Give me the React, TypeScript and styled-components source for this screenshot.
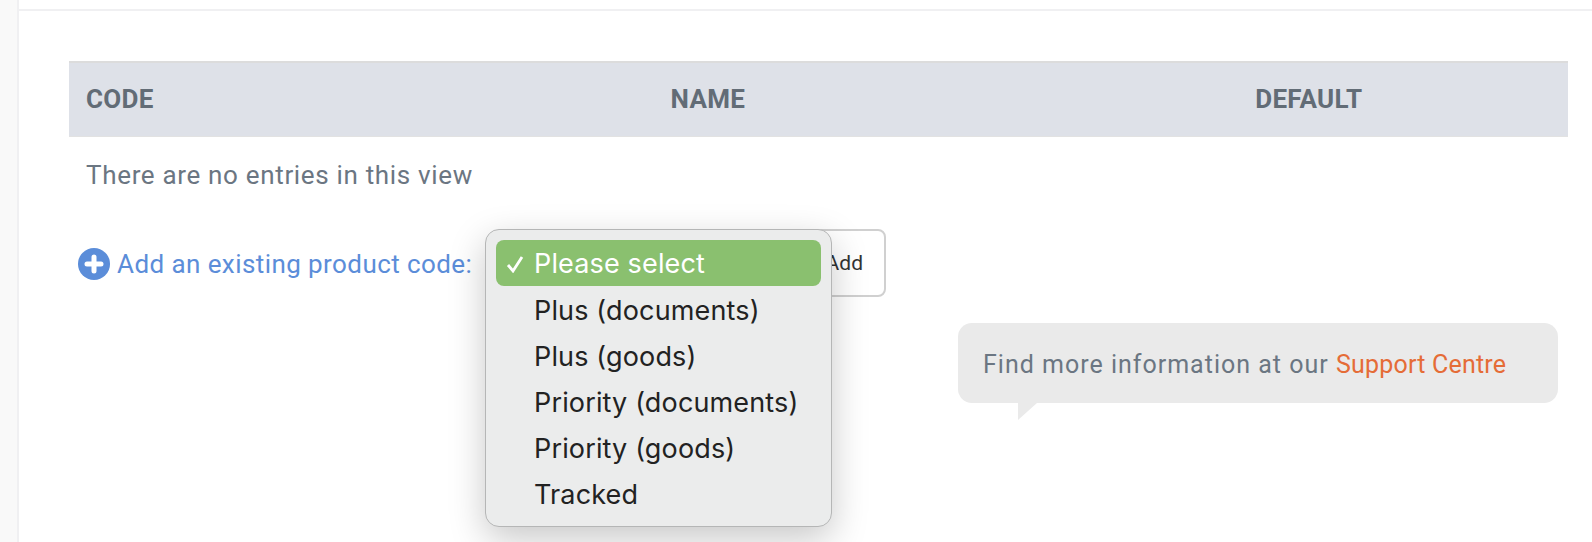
import React from "react"
import styled, { createGlobalStyle } from "styled-components"

const GlobalStyle = createGlobalStyle`
    html, body {
        margin: 0;
        padding: 0;
        background: #fff;
    }
`;

const options = ["Plus (documents)", "Plus (goods)", "Priority (documents)", "Priority (goods)", "Tracked"];

const App = () => (
    <>
        <GlobalStyle />
        <Page>
            <Sidebar />
            <Main>
                <TopBar />
                <Content>
                    <HeaderRow>
                        <HeaderCell $width="585px">CODE</HeaderCell>
                        <HeaderCell $width="585px">NAME</HeaderCell>
                        <HeaderCell $width="330px">DEFAULT</HeaderCell>
                    </HeaderRow>
                    <EmptyRow>There are no entries in this view</EmptyRow>
                    <AddRow>
                        <PlusIcon viewBox="0 0 32 32">
                            <circle cx="16" cy="16" r="16" fill="#5b8dd9" />
                            <path d="M16 9v14M9 16h14" stroke="#fff" strokeWidth="5" strokeLinecap="round" />
                        </PlusIcon>
                        <AddLabel>Add an existing product code:</AddLabel>
                        <SelectSpot>
                            <HiddenSelect />
                            <AddButton>Add</AddButton>
                            <Menu>
                                <SelectedOption>
                                    <Check viewBox="0 0 18 18">
                                        <path d="M2 10l5 6L16 2" fill="none" stroke="#fff" strokeWidth="2.8" />
                                    </Check>
                                    Please select
                                </SelectedOption>
                                {options.map((option) => (
                                    <Option key={option}>{option}</Option>
                                ))}
                            </Menu>
                        </SelectSpot>
                    </AddRow>
                    <Callout>
                        <span>Find more information at our <SupportLink>Support Centre</SupportLink></span>
                    </Callout>
                </Content>
            </Main>
        </Page>
    </>
);

export default App;

const Page = styled.div`
    display: flex;
    width: 1592px;
    height: 542px;
    overflow: hidden;
    font-family: "Roboto", "Liberation Sans", sans-serif;
`;

const Sidebar = styled.div`
    width: 17px;
    flex: none;
    background: #f9f9f9;
    border-right: 2px solid #f0f0f2;
`;

const Main = styled.div`
    flex: 1;
    min-width: 0;
`;

const TopBar = styled.div`
    height: 9px;
    border-bottom: 2px solid #f0f0f2;
`;

const Content = styled.div`
    padding: 50px 24px 0 50px;
`;

const HeaderRow = styled.div`
    display: flex;
    height: 76px;
    background: #dee1e8;
    border-top: 2px solid #dcdcdc;
    border-bottom: 1px solid #e2e2e2;
    box-sizing: border-box;
`;

const HeaderCell = styled.div<{ $width: string }>`
    width: ${({ $width }) => $width};
    padding: 0 0 2px 17px;
    box-sizing: border-box;
    align-self: center;
    font-size: 26px;
    font-weight: 700;
    letter-spacing: 0.3px;
    color: #626c76;
`;

const EmptyRow = styled.div`
    padding: 23px 17px 0;
    height: 36px;
    font-size: 26px;
    letter-spacing: 0.67px;
    line-height: 30px;
    color: #6b7682;
`;

const AddRow = styled.div`
    display: flex;
    align-items: center;
    height: 68px;
    margin-top: 33px;
    padding-left: 9px;
`;

const PlusIcon = styled.svg`
    width: 32px;
    height: 32px;
    flex: none;
    margin-top: 2px;
`;

const AddLabel = styled.span`
    width: 355px;
    flex: none;
    margin: 2px 0 0 7px;
    font-size: 26px;
    letter-spacing: 0.42px;
    color: #5b8dd9;
    white-space: nowrap;
`;

const SelectSpot = styled.div`
    position: relative;
    display: flex;
    margin-left: 33px;
    height: 68px;
`;

const HiddenSelect = styled.div`
    width: 260px;
    height: 68px;
    background: #8ac06f;
    border-radius: 8px;
`;

const AddButton = styled.div`
    width: 125px;
    height: 68px;
    box-sizing: border-box;
    margin-left: -4px;
    border: 2px solid #d0d0d0;
    border-radius: 8px;
    display: flex;
    align-items: center;
    justify-content: flex-end;
    padding-right: 21px;
    font-size: 21px;
    color: #333;
    background: #fff;
`;

const Menu = styled.div`
    position: absolute;
    left: -20px;
    top: 0;
    width: 347px;
    height: 298px;
    box-sizing: border-box;
    padding: 10px;
    background: #ebecec;
    border: 1px solid #b5b6b6;
    border-radius: 14px;
    box-shadow: 0 12px 36px rgba(0, 0, 0, 0.22);
    font-family: "Inter", sans-serif;
    font-size: 27px;
    letter-spacing: 0.15px;
    color: #222;
`;

const Option = styled.div`
    height: 46px;
    line-height: 49px;
    padding-left: 38px;
    white-space: nowrap;
`;

const SelectedOption = styled(Option)`
    position: relative;
    line-height: 47px;
    background: #8ac06f;
    color: #fff;
    border-radius: 8px;
`;

const Check = styled.svg`
    position: absolute;
    left: 10px;
    top: 15px;
    width: 18px;
    height: 18px;
`;

const Callout = styled.div`
    position: relative;
    display: flex;
    align-items: center;
    width: 600px;
    height: 80px;
    box-sizing: border-box;
    margin: 26px 0 0 889px;
    padding: 3px 0 0 25px;
    background: #eaeaea;
    border-radius: 14px;
    font-size: 25px;
    letter-spacing: 1px;
    color: #6b7682;
    white-space: nowrap;

    &::after {
        content: "";
        position: absolute;
        left: 60px;
        top: 80px;
        border-top: 17px solid #eaeaea;
        border-right: 19px solid transparent;
    }
`;

const SupportLink = styled.span`
    letter-spacing: 0.2px;
    color: #e56c37;
`;
